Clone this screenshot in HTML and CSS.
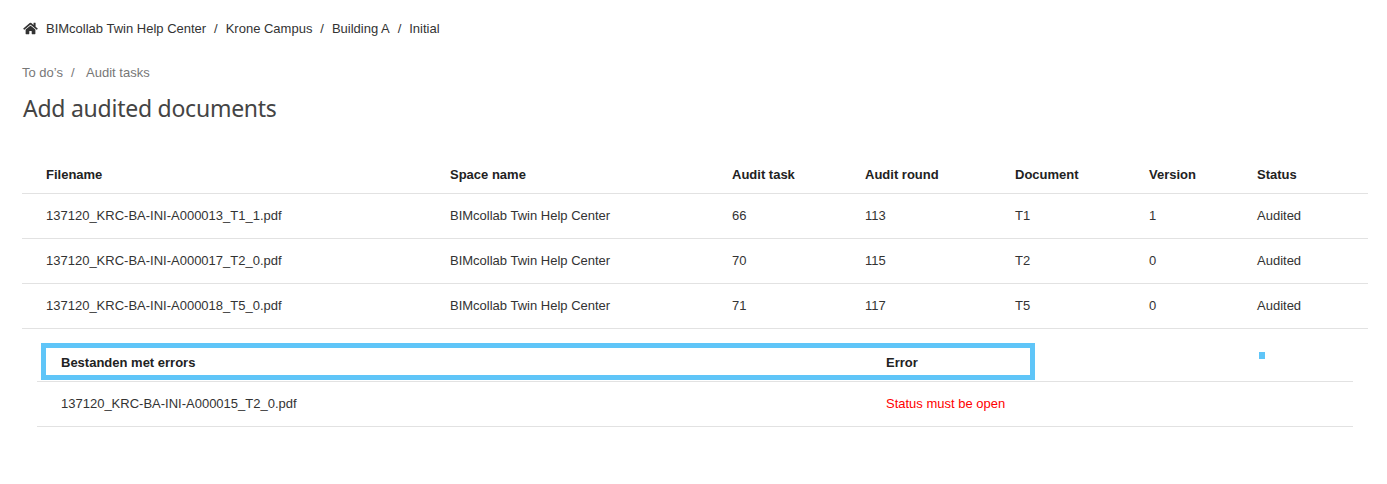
FILE: index.html
```html
<!DOCTYPE html>
<html lang="en">
<head>
<meta charset="utf-8">
<title>Add audited documents</title>
<link rel="stylesheet" href="styles.css">
</head>
<body>
<nav class="crumbs">
  <svg class="home" viewBox="0 0 576 512" aria-hidden="true"><path d="M280.37 148.26L96 300.11V464a16 16 0 0 0 16 16l112.06-.29a16 16 0 0 0 15.92-16V368a16 16 0 0 1 16-16h64a16 16 0 0 1 16 16v95.64a16 16 0 0 0 16 16.05L464 480a16 16 0 0 0 16-16V300L295.67 148.26a12.19 12.19 0 0 0-15.3 0zM571.6 251.47L488 182.56V44.05a12 12 0 0 0-12-12h-56a12 12 0 0 0-12 12v72.61L318.47 43a48 48 0 0 0-61 0L4.34 251.47a12 12 0 0 0-1.6 16.9l25.5 31A12 12 0 0 0 45.15 301l235.22-193.74a12.19 12.19 0 0 1 15.3 0L530.9 301a12 12 0 0 0 16.9-1.6l25.5-31a12 12 0 0 0-1.7-16.93z"/></svg>
  <span>BIMcollab Twin Help Center</span><i>/</i><span>Krone Campus</span><i>/</i><span>Building A</span><i>/</i><span>Initial</span>
</nav>
<nav class="subcrumbs"><span>To do’s</span><i>/</i><span>Audit tasks</span></nav>
<h1>Add audited documents</h1>

<table class="main">
  <colgroup><col class="c1"><col class="c2"><col class="c3"><col class="c4"><col class="c5"><col class="c6"><col class="c7"></colgroup>
  <thead>
    <tr><th>Filename</th><th>Space name</th><th>Audit task</th><th>Audit round</th><th>Document</th><th>Version</th><th>Status</th></tr>
  </thead>
  <tbody>
    <tr><td>137120_KRC-BA-INI-A000013_T1_1.pdf</td><td>BIMcollab Twin Help Center</td><td>66</td><td>113</td><td>T1</td><td>1</td><td>Audited</td></tr>
    <tr><td>137120_KRC-BA-INI-A000017_T2_0.pdf</td><td>BIMcollab Twin Help Center</td><td>70</td><td>115</td><td>T2</td><td>0</td><td>Audited</td></tr>
    <tr><td>137120_KRC-BA-INI-A000018_T5_0.pdf</td><td>BIMcollab Twin Help Center</td><td>71</td><td>117</td><td>T5</td><td>0</td><td>Audited</td></tr>
  </tbody>
</table>

<section class="errors">
  <div class="focus-box"></div>
  <div class="focus-dot"></div>
  <table class="sub">
    <colgroup><col class="e1"><col class="e2"></colgroup>
    <thead><tr><th>Bestanden met errors</th><th>Error</th></tr></thead>
    <tbody><tr><td>137120_KRC-BA-INI-A000015_T2_0.pdf</td><td class="err">Status must be open</td></tr></tbody>
  </table>
</section>
</body>
</html>
```
FILE: styles.css
```css
* { box-sizing: border-box; }
html, body { margin: 0; padding: 0; background: #fff; }
body {
  padding: 20px 19px 0 22px;
  font-family: "Liberation Sans", Arial, sans-serif;
  font-size: 13px;
  color: #333;
  overflow: hidden;
}
.crumbs {
  display: flex;
  align-items: center;
  height: 17px;
  color: #333;
  line-height: 17px;
}
.crumbs i, .subcrumbs i { font-style: normal; }
.crumbs i { margin: 0 7.95px; }
.home { width: 15px; height: 13px; margin-right: 8px; margin-left: 1px; fill: #333; }
.subcrumbs {
  display: flex;
  margin-top: 27px;
  height: 17px;
  line-height: 17px;
  font-size: 13px;
  color: #777;
}
.subcrumbs i { margin: 0 11.5px 0 8px; }
h1 {
  margin: 12px 0 0;
  padding-left: 1px;
  height: 30px;
  font-family: "Noto Sans", sans-serif;
  font-weight: 400;
  font-size: 23px;
  line-height: 30px;
  letter-spacing: -0.25px;
  color: #444;
}
table {
  border-collapse: collapse;
  table-layout: fixed;
  color: #333;
}
th { color: #222; }
.main { width: 1346px; margin-top: 28px; }
.c1 { width: 428px; }
.c2 { width: 282px; }
.c3 { width: 133px; }
.c4 { width: 150px; }
.c5 { width: 134px; }
.c6 { width: 108px; }
th {
  text-align: left;
  font-weight: 700;
  padding: 0 0 0 24px;
}
td { padding: 0 0 0 24px; }
tr { border-bottom: 1px solid #e2e2e2; }
.main th { height: 42px; padding-top: 6px; }
.main td { height: 45px; }
.main th + th, .main td + td { padding-left: 0; }
.errors {
  position: relative;
  margin: 14px 15px 0;
  width: 1316px;
}
.sub { width: 1316px; }
.e1 { width: 849px; }
.sub th { height: 39px; padding-top: 1px; }
.sub td { height: 45px; padding-bottom: 2px; }
.sub th + th, .sub td + td { padding-left: 0; }
.err { color: #f00; }
.focus-box {
  position: absolute;
  left: 4px;
  top: 0;
  width: 994px;
  height: 37px;
  border: 5px solid #5fc5f8;
}
.focus-dot {
  position: absolute;
  left: 1222px;
  top: 9px;
  width: 6px;
  height: 7px;
  background: #5fc5f8;
}
```
